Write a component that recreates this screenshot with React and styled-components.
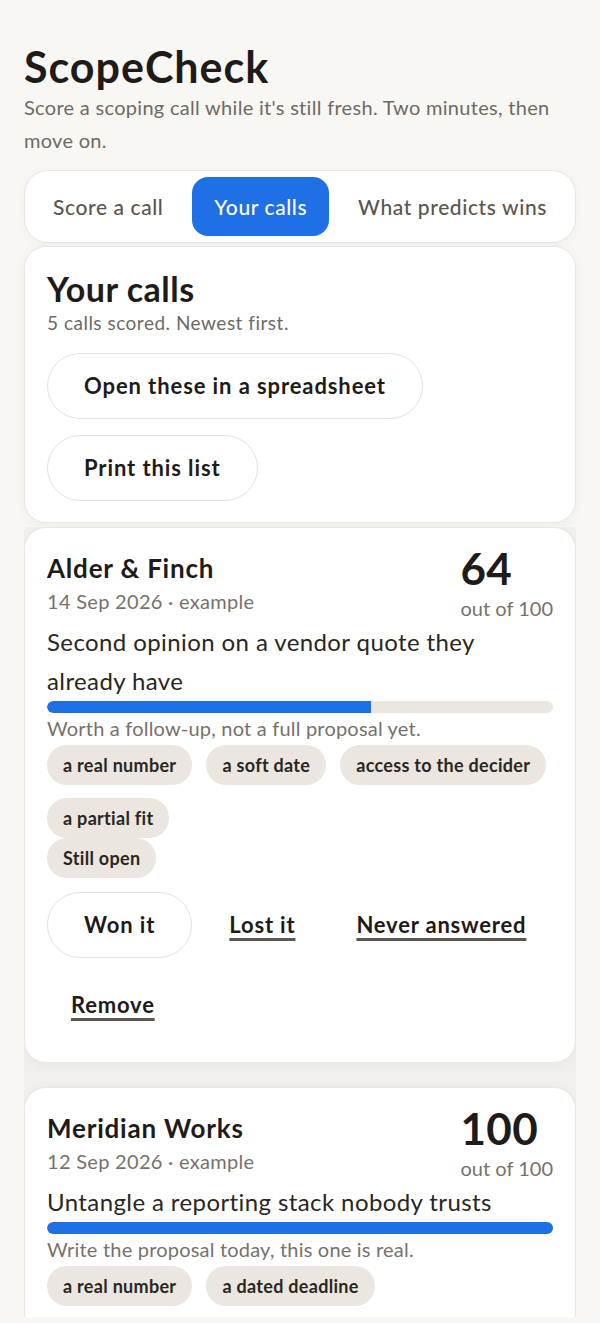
import React from "react";
import styled, { createGlobalStyle } from "styled-components";

const GlobalStyle = createGlobalStyle`
  html, body {
    margin: 0;
    padding: 0;
    background: #f8f7f4;
  }
  body {
    font-family: Lato, "Noto Sans", sans-serif;
    color: #1e1b18;
    -webkit-font-smoothing: antialiased;
  }
  * { box-sizing: border-box; }
`;

const calls = [
  {
    id: 1,
    name: "Alder & Finch",
    date: "14 Sep 2026",
    source: "example",
    score: 64,
    summary: "Second opinion on a vendor quote they already have",
    verdict: "Worth a follow-up, not a full proposal yet.",
    tags: ["a real number", "a soft date", "access to the decider", "a partial fit"],
    status: "Still open",
  },
  {
    id: 2,
    name: "Meridian Works",
    date: "12 Sep 2026",
    source: "example",
    score: 100,
    summary: "Untangle a reporting stack nobody trusts",
    verdict: "Write the proposal today, this one is real.",
    tags: ["a real number", "a dated deadline"],
    status: null,
  },
];

const tabs = ["Score a call", "Your calls", "What predicts wins"];

const App = () => {
  return (
    <Page>
      <GlobalStyle />
      <Title>ScopeCheck</Title>
      <Tagline>Score a scoping call while it's still fresh. Two minutes, then move on.</Tagline>
      <TabBar>
        {tabs.map((t) => (
          <Tab key={t} $active={t === "Your calls"}>
            {t}
          </Tab>
        ))}
      </TabBar>
      <Panel>
        <HeaderCard>
          <Heading>Your calls</Heading>
          <Count>5 calls scored. Newest first.</Count>
          <ButtonRow>
            <PillButton>Open these in a spreadsheet</PillButton>
            <PillButton>Print this list</PillButton>
          </ButtonRow>
        </HeaderCard>
        <CallList>
          {calls.map((c) => (
            <CallCard key={c.id} call={c} />
          ))}
        </CallList>
      </Panel>
    </Page>
  );
};

const CallCard = ({ call }) => (
  <Card>
    <CardTop>
      <div>
        <CallName>{call.name}</CallName>
        <Meta>
          {call.date} · {call.source}
        </Meta>
      </div>
      <ScoreBox>
        <ScoreNumber>{call.score}</ScoreNumber>
        <ScoreOf>out of 100</ScoreOf>
      </ScoreBox>
    </CardTop>
    <Summary>{call.summary}</Summary>
    <Bar>
      <BarFill style={{ width: `${call.score}%` }} />
    </Bar>
    <Verdict>{call.verdict}</Verdict>
    <Tags>
      {call.tags.map((t) => (
        <Chip key={t}>{t}</Chip>
      ))}
    </Tags>
    {call.status && <Chip>{call.status}</Chip>}
    <Actions>
      <PillButton>Won it</PillButton>
      <LinkButton>Lost it</LinkButton>
      <LinkButton>Never answered</LinkButton>
      <LinkButton>Remove</LinkButton>
    </Actions>
  </Card>
);

const Page = styled.div`
  height: 1323px;
  overflow: hidden;
  padding: 44px 24px 6px;
  display: flex;
  flex-direction: column;
`;

const Title = styled.h1`
  margin: 0;
  font-size: 43px;
  line-height: 46px;
  font-weight: 700;
  letter-spacing: 1px;
  color: #1e1b18;
`;

const Tagline = styled.p`
  margin: 1px 0 0;
  font-size: 20px;
  line-height: 33px;
  letter-spacing: 0.3px;
  color: #6f6a64;
`;

const TabBar = styled.nav`
  margin-top: 13px;
  background: #fff;
  border: 1px solid #e9e4dd;
  border-radius: 24px;
  padding: 6px;
  display: flex;
  justify-content: space-between;
  box-shadow: 0 2px 10px rgba(60, 40, 20, 0.04);
`;

const Tab = styled.button`
  border: none;
  border-radius: 16px;
  padding: 0 22px;
  height: 59px;
  font-family: inherit;
  font-size: 21px;
  font-weight: 500;
  letter-spacing: 0.6px;
  background: ${(p) => (p.$active ? "#1f6fe5" : "transparent")};
  color: ${(p) => (p.$active ? "#fff" : "#5b554f")};
`;

const Panel = styled.div`
  margin-top: 3px;
  display: flex;
  flex-direction: column;
  gap: 4px;
  flex: 1;
  min-height: 0;
`;

const Card = styled.section`
  background: #fff;
  border: 1px solid #ebe6df;
  border-radius: 22px;
  padding: 24px 22px;
  display: flex;
  flex-direction: column;
  align-items: flex-start;
  box-shadow: 0 2px 12px rgba(60, 40, 20, 0.05);
`;

const HeaderCard = styled(Card)`
  padding-bottom: 21px;
`;

const Heading = styled.h2`
  margin: -2px 0 0;
  font-size: 34px;
  line-height: 40px;
  font-weight: 700;
  letter-spacing: 0.5px;
`;

const Count = styled.p`
  margin: 3px 0 0;
  font-size: 19px;
  line-height: 22px;
  letter-spacing: 0.5px;
  color: #6f6a64;
`;

const ButtonRow = styled.div`
  margin-top: 19px;
  display: flex;
  flex-wrap: wrap;
  gap: 16px;
`;

const PillButton = styled.button`
  background: #fff;
  border: 1px solid #e6e1da;
  border-radius: 999px;
  padding: 18px 36px;
  font-family: inherit;
  font-size: 22px;
  line-height: 28px;
  font-weight: 700;
  letter-spacing: 0.9px;
  color: #1e1b18;
`;

const LinkButton = styled.button`
  background: transparent;
  border: none;
  padding: 19px 24px;
  font-family: inherit;
  font-size: 22px;
  line-height: 28px;
  font-weight: 700;
  letter-spacing: 0.8px;
  color: #1e1b18;
  text-decoration: underline;
  text-decoration-thickness: 3px;
  text-underline-offset: 5px;
  text-decoration-color: #5b5650;
`;

const CallList = styled.div`
  display: flex;
  flex-direction: column;
  gap: 24px;
  background: #f2f0ec;
  flex: 1;
  min-height: 0;
  overflow: hidden;
`;

const CardTop = styled.div`
  align-self: stretch;
  display: flex;
  justify-content: space-between;
  align-items: flex-start;
`;

const CallName = styled.h3`
  margin: 0;
  font-size: 26px;
  line-height: 32px;
  font-weight: 700;
  letter-spacing: 0.8px;
`;

const Meta = styled.div`
  margin-top: 4px;
  font-size: 20px;
  line-height: 26px;
  letter-spacing: 0.3px;
  color: #77716b;
`;

const ScoreBox = styled.div`
  text-align: left;
`;

const ScoreNumber = styled.div`
  margin-top: -6px;
  font-size: 44px;
  line-height: 44px;
  font-weight: 700;
  letter-spacing: 0.3px;
`;

const ScoreOf = styled.div`
  margin-top: 6px;
  font-size: 20px;
  line-height: 24px;
  color: #77716b;
`;

const Summary = styled.p`
  margin: 2px 0 0;
  font-size: 24px;
  line-height: 39px;
  letter-spacing: 0.4px;
  color: #2a2622;
`;

const Bar = styled.div`
  align-self: stretch;
  margin-top: 1px;
  height: 12px;
  border-radius: 6px;
  background: #ebe6df;
  overflow: hidden;
`;

const BarFill = styled.div`
  height: 100%;
  background: #1f6fe5;
  border-radius: 6px 0 0 6px;
`;

const Verdict = styled.p`
  margin: 3px 0 0;
  font-size: 20px;
  line-height: 24px;
  letter-spacing: 0.2px;
  color: #77716b;
`;

const Tags = styled.div`
  margin-top: 5px;
  display: flex;
  flex-wrap: wrap;
  gap: 13px 14px;
`;

const Chip = styled.span`
  display: inline-block;
  background: #ebe6df;
  border-radius: 999px;
  padding: 9px 16px;
  font-size: 18px;
  line-height: 22px;
  font-weight: 700;
  letter-spacing: 0.3px;
  color: #2a2622;
`;

const Actions = styled.div`
  margin-top: 14px;
  display: flex;
  flex-wrap: wrap;
  gap: 14px 13px;
`;

export default App;
